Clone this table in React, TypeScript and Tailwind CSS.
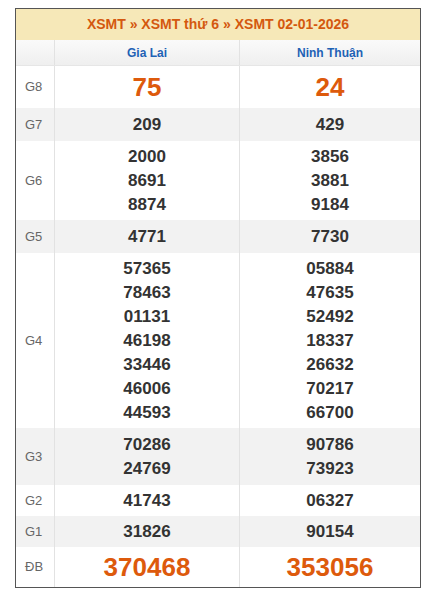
const rows = [
  { label: "G8", h: "h-[42px]", big: true, a: ["75"], b: ["24"] },
  { label: "G7", h: "h-[33px]", a: ["209"], b: ["429"] },
  { label: "G6", h: "h-[79px]", a: ["2000", "8691", "8874"], b: ["3856", "3881", "9184"] },
  { label: "G5", h: "h-[33px]", a: ["4771"], b: ["7730"] },
  {
    label: "G4",
    h: "h-[175px]",
    a: ["57365", "78463", "01131", "46198", "33446", "46006", "44593"],
    b: ["05884", "47635", "52492", "18337", "26632", "70217", "66700"],
  },
  { label: "G3", h: "h-[57px]", a: ["70286", "24769"], b: ["90786", "73923"] },
  { label: "G2", h: "h-[31px]", a: ["41743"], b: ["06327"] },
  { label: "G1", h: "h-[31px]", a: ["31826"], b: ["90154"] },
  { label: "ĐB", h: "h-[40px]", big: true, a: ["370468"], b: ["353056"] },
]

const Cell = ({ nums, big }: { nums: string[]; big?: boolean }) => (
  <div className="flex flex-col items-center justify-center border-l border-[#e2e2e2]">
    {nums.map((n) => (
      <span
        key={n}
        className={
          big
            ? "text-[26px] leading-[30px] font-bold text-[#dd5a0c]"
            : "text-[17px] leading-[24px] font-bold text-[#333]"
        }
      >
        {n}
      </span>
    ))}
  </div>
)

export default function App() {
  return (
    <div className="bg-white pt-2 pl-[15px] min-h-[600px] font-['Liberation_Sans',Arial,sans-serif]">
      <div className="w-[406px] border border-[#555]">
        <div className="h-[31px] bg-[#f6e8b8] flex items-center justify-center text-[14px] font-bold text-[#d4580f]">
          XSMT » XSMT thứ 6 » XSMT 02-01-2026
        </div>
        <div className="grid grid-cols-[38px_185px_1fr] h-[26px] bg-gradient-to-b from-[#fafafa] to-[#efefef] border-b border-[#e6e6e6] text-[12px] font-bold text-[#1e62b5]">
          <div />
          <div className="flex items-center justify-center border-l border-[#e2e2e2]">Gia Lai</div>
          <div className="flex items-center justify-center border-l border-[#e2e2e2]">Ninh Thuận</div>
        </div>
        {rows.map((r, i) => (
          <div
            key={r.label}
            className={`grid grid-cols-[38px_185px_1fr] ${r.h} ${i % 2 === 1 ? "bg-[#f2f2f2]" : "bg-white"}`}
          >
            <div className="flex items-center pl-[9px] text-[13px] text-[#666]">{r.label}</div>
            <Cell nums={r.a} big={r.big} />
            <Cell nums={r.b} big={r.big} />
          </div>
        ))}
      </div>
    </div>
  )
}
